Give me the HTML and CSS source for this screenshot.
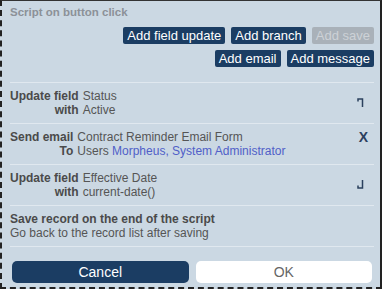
FILE: index.html
```html
<!DOCTYPE html>
<html lang="en">
<head>
    <meta charset="UTF-8">
    <title>Script on button click</title>
    <link rel="stylesheet" href="styles.css">
</head>
<body>
    <div class="dialog">
        <h3 class="title">Script on button click</h3>

        <div class="toolbar">
            <div class="tool-row">
                <button class="tool">Add field update</button>
                <button class="tool">Add branch</button>
                <button class="tool disabled">Add save</button>
            </div>
            <div class="tool-row">
                <button class="tool">Add email</button>
                <button class="tool">Add message</button>
            </div>
        </div>

        <div class="steps">
            <div class="step">
                <div class="pairs">
                    <span class="key">Update field</span><span>Status</span>
                    <span class="key">with</span><span>Active</span>
                </div>
                <svg class="icon" width="7" height="9" viewBox="0 0 7 9">
                    <path d="M1 3.5V1H5.5V9" fill="none" stroke="#2b405e" stroke-width="1.5"/>
                </svg>
            </div>
            <div class="step">
                <div class="pairs">
                    <span class="key">Send email</span><span>Contract Reminder Email Form</span>
                    <span class="key">To</span><span>Users <a class="link">Morpheus, System Administrator</a></span>
                </div>
                <span class="remove">X</span>
            </div>
            <div class="step">
                <div class="pairs">
                    <span class="key">Update field</span><span>Effective Date</span>
                    <span class="key">with</span><span>current-date()</span>
                </div>
                <svg class="icon" width="7" height="9" viewBox="0 0 7 9">
                    <path d="M5.5 0V8H1V5.5" fill="none" stroke="#2b405e" stroke-width="1.5"/>
                </svg>
            </div>
            <div class="step">
                <div>
                    <div class="key">Save record on the end of the script</div>
                    <div>Go back to the record list after saving</div>
                </div>
            </div>
        </div>

        <div class="footer">
            <button class="btn cancel">Cancel</button>
            <button class="btn ok">OK</button>
        </div>
    </div>
</body>
</html>
```

FILE: styles.css
```css
body {
    margin: 0;
    font-family: "Liberation Sans", Arial, sans-serif;
}
.dialog {
    width: 382px;
    height: 289px;
    box-sizing: border-box;
    background-color: #cbd8e3;
    border-top: 1px solid #333;
    border-right: 2px solid #222;
    border-left: 2px dashed #222;
    border-bottom: 2px dashed #222;
    padding: 4px 6px 0 8px;
    color: #555;
    font-size: 12px;
}
.title {
    margin: 0;
    font-size: 11.5px;
    line-height: 15px;
    color: #8c9198;
}
.toolbar {
    display: flex;
    flex-direction: column;
    align-items: flex-end;
    gap: 6px;
    margin-top: 7px;
}
.tool-row {
    display: flex;
    gap: 6px;
}
.tool {
    font-family: inherit;
    font-size: 13px;
    line-height: 17px;
    padding: 0 4px;
    border: none;
    border-radius: 2px;
    background-color: #1b3d63;
    color: #fff;
}
.tool.disabled {
    background-color: #a9b1b9;
    color: #cdd2d7;
}
.steps {
    margin-top: 15px;
}
.step {
    display: flex;
    justify-content: space-between;
    border-top: 1px solid #e0e8ef;
    padding: 6px 0;
    line-height: 14px;
}
.step:last-child {
    border-bottom: 1px solid #e0e8ef;
}
.pairs {
    display: grid;
    grid-template-columns: auto 1fr;
    column-gap: 4px;
}
.pairs .key {
    text-align: right;
}
.key {
    font-weight: bold;
    color: #4a4a4a;
}
.link {
    color: #5060c8;
}
.icon {
    margin: 9px 10px 0 0;
}
.remove {
    margin: 0 6px 0 0;
    font-weight: bold;
    font-size: 14px;
    color: #2b405e;
}
.footer {
    display: flex;
    gap: 7px;
    padding: 14px 2px 0 2px;
}
.btn {
    flex: 1;
    height: 22px;
    border: none;
    border-radius: 5px;
    font-family: inherit;
    font-size: 14px;
}
.cancel {
    background-color: #1b3d63;
    color: #fff;
}
.ok {
    background-color: #fff;
    color: #666;
}
```
